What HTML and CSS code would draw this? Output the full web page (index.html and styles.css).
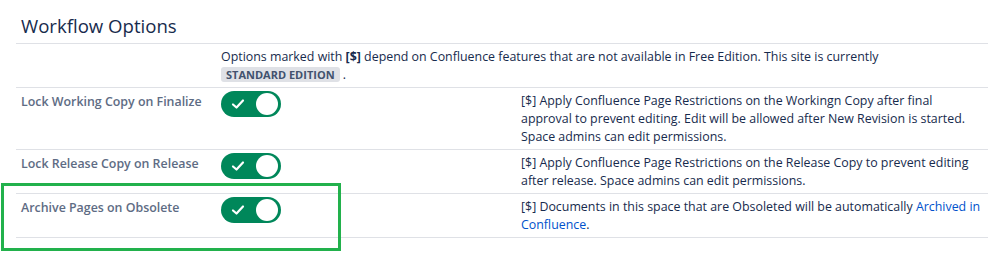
FILE: index.html
```html
<!DOCTYPE html>
<html lang="en">
<head>
    <meta charset="UTF-8">
    <title>Workflow Options</title>
    <link rel="stylesheet" href="styles.css">
</head>
<body>

<div class="settings">
    <h2 class="settings-title">Workflow Options</h2>

    <!-- note about paid features -->
    <div class="row">
        <div class="cell label"></div>
        <div class="cell note">
            Options marked with <b>[$]</b> depend on Confluence features that are not available in Free Edition. This site is currently
            <span class="lozenge">Standard Edition</span> .
        </div>
    </div>

    <div class="row">
        <div class="cell label">Lock Working Copy on Finalize</div>
        <div class="cell toggle-cell">
            <button class="toggle on" aria-label="Lock Working Copy on Finalize">
                <svg class="tick" width="14" height="12" viewBox="0 0 14 12"><path d="M2 6.5 L5.5 9.5 L12 2.5" fill="none" stroke="#fff" stroke-width="2.2" stroke-linecap="round" stroke-linejoin="round"/></svg>
                <span class="knob"></span>
            </button>
        </div>
        <div class="cell desc">[$] Apply Confluence Page Restrictions on the Workingn Copy after final approval to prevent editing. Edit will be allowed after New Revision is started. Space admins can edit permissions.</div>
    </div>

    <div class="row">
        <div class="cell label">Lock Release Copy on Release</div>
        <div class="cell toggle-cell">
            <button class="toggle on" aria-label="Lock Release Copy on Release">
                <svg class="tick" width="14" height="12" viewBox="0 0 14 12"><path d="M2 6.5 L5.5 9.5 L12 2.5" fill="none" stroke="#fff" stroke-width="2.2" stroke-linecap="round" stroke-linejoin="round"/></svg>
                <span class="knob"></span>
            </button>
        </div>
        <div class="cell desc">[$] Apply Confluence Page Restrictions on the Release Copy to prevent editing after release. Space admins can edit permissions.</div>
    </div>

    <div class="row">
        <div class="cell label">Archive Pages on Obsolete</div>
        <div class="cell toggle-cell">
            <button class="toggle on" aria-label="Archive Pages on Obsolete">
                <svg class="tick" width="14" height="12" viewBox="0 0 14 12"><path d="M2 6.5 L5.5 9.5 L12 2.5" fill="none" stroke="#fff" stroke-width="2.2" stroke-linecap="round" stroke-linejoin="round"/></svg>
                <span class="knob"></span>
            </button>
        </div>
        <div class="cell desc">[$] Documents in this space that are Obsoleted will be automatically <a href="#">Archived in Confluence</a>.</div>
    </div>
</div>

<!-- highlight box drawn over the last row -->
<div class="highlight"></div>

</body>
</html>
```

FILE: styles.css
```css
* {
    margin: 0;
    padding: 0;
    box-sizing: border-box;
}
html, body {
    height: 100%;
}
body {
    font-family: "Open Sans", "Noto Sans", sans-serif;
    font-size: 12.4px;
    color: #172b4d;
    background: #fff;
    position: relative;
}
.settings {
    width: 972px;
    margin-left: 16px;
}
.settings-title {
    font-size: 18.6px;
    font-weight: 400;
    line-height: 24px;
    padding: 14px 5px 5px;
    border-bottom: 1px solid #dfe1e6;
}
/* each option is one row of three columns */
.row {
    display: grid;
    grid-template-columns: 200px 300px 1fr;
    border-bottom: 1px solid #dfe1e6;
}
.cell {
    padding: 4px 5px 3px;
    line-height: 18px;
}
.label {
    padding-top: 5px;
    color: #5e6c84;
    font-weight: 600;
}
.note {
    grid-column: 2 / 4;
}
.note b {
    font-weight: 700;
}
.lozenge {
    display: inline-block;
    background: #dfe1e6;
    color: #42526e;
    font-size: 11px;
    font-weight: 700;
    text-transform: uppercase;
    line-height: 15px;
    padding: 0 5px;
    border-radius: 3px;
}
.toggle-cell {
    padding-top: 3px;
}
/* toggle switch */
.toggle {
    display: flex;
    align-items: center;
    justify-content: space-between;
    width: 60px;
    height: 26px;
    padding: 0 3px 0 10px;
    border: none;
    border-radius: 13px;
    background: #00875a;
    cursor: pointer;
}
.knob {
    width: 22px;
    height: 22px;
    border-radius: 50%;
    background: #fff;
}
.desc a {
    color: #0052cc;
    text-decoration: none;
}
.highlight {
    position: absolute;
    left: 1px;
    top: 183px;
    width: 340px;
    height: 68px;
    border: 3px solid #22b14c;
}
```
